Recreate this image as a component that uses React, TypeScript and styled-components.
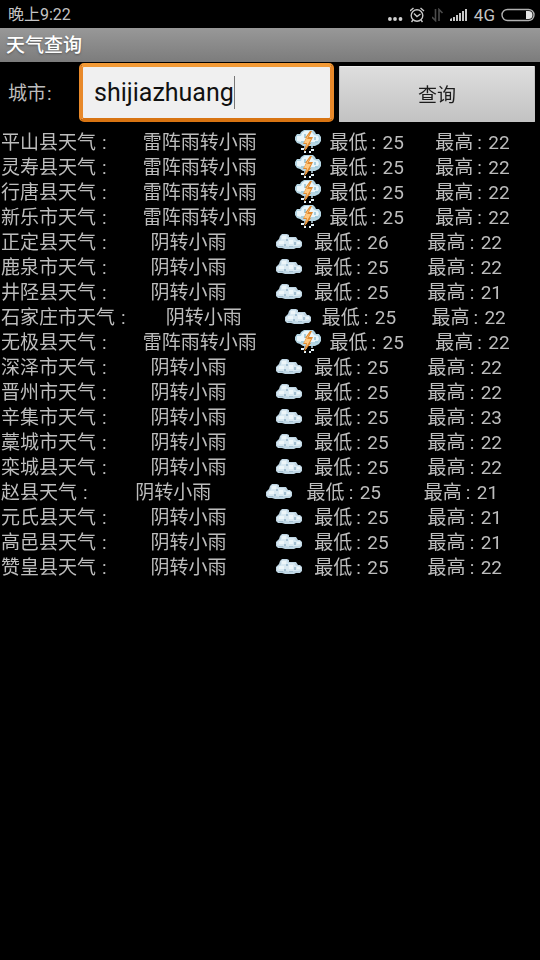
import React, { useState } from 'react';
import styled, { createGlobalStyle } from 'styled-components';

const GlobalStyle = createGlobalStyle`
  *, *::before, *::after { box-sizing: border-box; }
  body {
    margin: 0;
    background: #000;
    color: #bdbdbd;
    font-family: Roboto, "Noto Sans CJK SC", sans-serif;
    font-size: 19px;
  }
`;

const Screen = styled.div`
  display: flex;
  flex-direction: column;
  min-height: 100vh;
  background: #000;
`;

const StatusBar = styled.header`
  display: flex;
  align-items: center;
  justify-content: space-between;
  height: 28px;
  padding: 1px 5px 0 8px;
  font-size: 16px;
  line-height: 28px;
  color: #c4c4c4;
`;

const StatusIcons = styled.div`
  display: flex;
  align-items: center;
  gap: 6px;

  svg { display: block; }
`;

const Generation = styled.span`
  font-size: 17px;
`;

const TitleBar = styled.h1`
  margin: 0;
  height: 34px;
  padding: 0 6px;
  background: linear-gradient(#989898, #7c7c7c);
  color: #fff;
  font-size: 19px;
  font-weight: 500;
  line-height: 35px;
  text-shadow: 0 1px 2px #555;
`;

const SearchForm = styled.form`
  display: grid;
  grid-template-columns: 71px 260fr 196fr;
  align-items: center;
  height: 62px;
  padding: 1px 5px 2px 8px;
`;

const CityLabel = styled.label`
  padding-top: 3px;
  line-height: 28px;
`;

const CityField = styled.div`
  display: flex;
  align-items: center;
  min-width: 0;
  height: 59px;
  margin-right: 5px;
  padding: 0 11px;
  overflow: hidden;
  border: 4px solid #e8892a;
  border-color: #f39a35 #e8892a #d87412;
  border-radius: 5px;
  background: #f0f0f0;
`;

const CityInput = styled.input`
  min-width: 0;
  height: 48px;
  padding: 0;
  border: 0;
  outline: 0;
  background: transparent;
  color: #111;
  caret-color: transparent;
  font-family: inherit;
  font-size: 25px;
  field-sizing: content;
`;

const Caret = styled.span`
  flex: none;
  width: 1px;
  height: 33px;
  background: #777;
`;

const QueryButton = styled.button`
  height: 56px;
  margin-top: 2px;
  padding: 0;
  border: 1px solid #c4c4c4;
  border-top-color: #ededed;
  border-radius: 1px;
  background: linear-gradient(#dedede, #c3c3c3);
  color: #1c1c1c;
  font-family: inherit;
  font-size: 19px;
`;

const Forecast = styled.table`
  display: block;
  margin-top: 6px;
  line-height: 25px;
  white-space: nowrap;
`;

const Rows = styled.tbody`
  display: block;
`;

const Row = styled.tr`
  display: flex;
  height: 25px;
`;

const City = styled.th`
  flex: 1 0 auto;
  padding: 0 0 0 1px;
  font-weight: 400;
  text-align: left;
`;

const Condition = styled.td`
  flex: 1 0 auto;
  padding: 0;
`;

const IconCell = styled.td`
  display: flex;
  flex: 1 0 20px;
  justify-content: center;
  padding: 0 0 0 4px;

  svg { display: block; flex: none; }
`;

const Temperature = styled.td`
  flex: 1 0 80px;
  padding: 0 0 0 1px;
`;

const Colon = styled.span<{ $wide?: boolean }>`
  display: inline-block;
  width: ${(props) => (props.$wide ? 21 : 15)}px;
  padding-left: ${(props) => (props.$wide ? 6 : 4)}px;
`;

const LabelColon = styled.span`
  padding-left: 1px;
`;

type Sky = 'storm' | 'cloud';

const StormIcon = () => (
  <svg width="26" height="25" viewBox="0 0 26 25" role="img" aria-label="雷阵雨">
    <path d="M5 14l-3-1-2-3V7l2-3h3l1-2 3-2h9l2 2 1 2h3l2 3v4l-2 3-4 2H8z" fill="#b5d6e4" />
    <path d="M2 6h4l1-3 3-2h6l3 4 4 1 1 3-2 3h-7l-4 2-5-2-4-1z" fill="#eaf6fa" />
    <path d="M6 11h3v2H6zM20 11h3v2h-3zM9 4h2v4H9zM19 7h2v3h-2z" fill="#a6cddd" />
    <path d="M6 18h3v2H6zM16 19h3v2h-3zM9 21h2v2H9zM14 21h2v2h-2z" fill="#e4f1f7" />
    <path d="M9 16h3v3H9zM16 16h2v2h-2z" fill="#91a5ae" />
    <path d="M15 1h2l-3 6h4l-3 6h1l-7 9 2-8H8l3-6h-1z" fill="#e08a30" />
    <path d="M15 3l-3 6h4l-3 5-2 4 1-5h-3l3-6z" fill="#ffc981" />
  </svg>
);

const CloudIcon = () => (
  <svg width="26" height="25" viewBox="0 0 26 25" role="img" aria-label="阴">
    <path d="M2 18l-2-2v-4l2-2 1-1 1-3 2-2h5l2 1v2h7l2 3h2l2 2v4l-2 2h-4l-2 1h-9l-3-1z" fill="#bfd6e4" />
    <path d="M5 6l2-1h4l1 3h6l2 3h4l1 2v2l-3 1h-4l-3 1-5-1H3l-2-1v-3l4-2z" fill="#d9e9f2" />
    <path d="M6 6h4v3H6zM3 11h5v3H3zM13 10h4v4h-4zM21 12h3v2h-3z" fill="#edf6fa" />
    <path d="M10 9h2v2h-2zM8 14h2v2H8zM18 12h2v3h-2zM13 16h4v1h-4zM3 16h4v1H3z" fill="#a4c0d2" />
  </svg>
);

const STORM = { sky: 'storm' as Sky, text: '雷阵雨转小雨' };
const CLOUD = { sky: 'cloud' as Sky, text: '阴转小雨' };

const forecast = [
  { city: '平山县', ...STORM, low: 25, high: 22 },
  { city: '灵寿县', ...STORM, low: 25, high: 22 },
  { city: '行唐县', ...STORM, low: 25, high: 22 },
  { city: '新乐市', ...STORM, low: 25, high: 22 },
  { city: '正定县', ...CLOUD, low: 26, high: 22 },
  { city: '鹿泉市', ...CLOUD, low: 25, high: 22 },
  { city: '井陉县', ...CLOUD, low: 25, high: 21 },
  { city: '石家庄市', ...CLOUD, low: 25, high: 22 },
  { city: '无极县', ...STORM, low: 25, high: 22 },
  { city: '深泽市', ...CLOUD, low: 25, high: 22 },
  { city: '晋州市', ...CLOUD, low: 25, high: 22 },
  { city: '辛集市', ...CLOUD, low: 25, high: 23 },
  { city: '藁城市', ...CLOUD, low: 25, high: 22 },
  { city: '栾城县', ...CLOUD, low: 25, high: 22 },
  { city: '赵县', ...CLOUD, low: 25, high: 21 },
  { city: '元氏县', ...CLOUD, low: 25, high: 21 },
  { city: '高邑县', ...CLOUD, low: 25, high: 21 },
  { city: '赞皇县', ...CLOUD, low: 25, high: 22 },
];

export default function App() {
  const [city, setCity] = useState('shijiazhuang');

  return (
    <Screen>
      <GlobalStyle />
      <StatusBar>
        <span>晚上9:22</span>
        <StatusIcons>
          <svg width="16" height="16" viewBox="0 0 16 16" fill="#d0d0d0">
            <circle cx="1.900" cy="12" r="1.900" />
            <circle cx="7" cy="12" r="1.900" />
            <circle cx="12.500" cy="12" r="1.900" />
          </svg>
          <svg width="16" height="16" viewBox="0 0 16 16" fill="none" stroke="#c8c8c8" strokeWidth="1.4">
            <circle cx="7" cy="8.500" r="5.800" />
            <path d="M0 4l3.500-3M14 4l-3.500-3M4 6.500l3 3 3.500-2.500M3 13l-1.500 2M11 13l1.500 2" />
          </svg>
          <svg width="12" height="14" viewBox="0 0 12 14" fill="none" stroke="#4c4c4c" strokeWidth="1.6">
            <path d="M3.500 1v11.500L0 9M7 13V1.500L10.500 5" />
          </svg>
          <svg width="18" height="14" viewBox="0 0 18 14" fill="#c8c8c8">
            <path d="M0 13v-2l2-1v3zM3 13v-4h2v4zM6 13V7h2v6zM9 13V5h2v8zM12 13V3h2v10zM15 13V1h2v12z" />
          </svg>
          <Generation>4G</Generation>
          <svg width="34" height="14" viewBox="0 0 34 14">
            <rect x="1" y="1.500" width="32" height="11" rx="5.500" fill="none" stroke="#b0b0b0" strokeWidth="1.4" />
            <path d="M25 3h2.500a4 4 0 0 1 0 8H25z" fill="#e4e4e4" />
          </svg>
        </StatusIcons>
      </StatusBar>
      <TitleBar>天气查询</TitleBar>
      <SearchForm onSubmit={(event) => event.preventDefault()}>
        <CityLabel htmlFor="city">城市<LabelColon>:</LabelColon></CityLabel>
        <CityField>
          <CityInput
            id="city"
            type="text"
            autoFocus
            autoComplete="off"
            spellCheck={false}
            value={city}
            onChange={(event) => setCity(event.target.value)}
          />
          <Caret />
        </CityField>
        <QueryButton type="submit">查询</QueryButton>
      </SearchForm>
      <Forecast>
        <Rows>
          {forecast.map((row) => (
            <Row key={row.city}>
              <City scope="row">{row.city}天气<Colon $wide>:</Colon></City>
              <Condition>{row.text}</Condition>
              <IconCell>{row.sky === 'storm' ? <StormIcon /> : <CloudIcon />}</IconCell>
              <Temperature>最低<Colon>:</Colon>{row.low}</Temperature>
              <Temperature>最高<Colon>:</Colon>{row.high}</Temperature>
            </Row>
          ))}
        </Rows>
      </Forecast>
    </Screen>
  );
}
